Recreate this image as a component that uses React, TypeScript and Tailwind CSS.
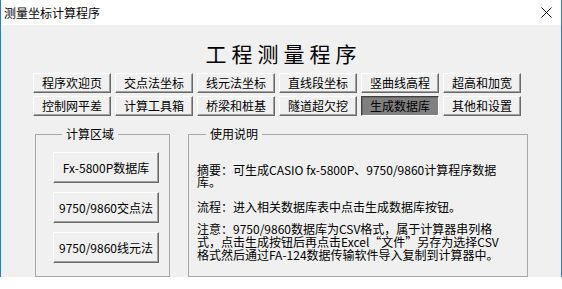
import React from "react";

const font = { fontFamily: '"Noto Sans CJK SC", "Noto Sans", sans-serif' };

const btn =
  "flex items-center justify-center text-[12px] leading-none text-black bg-[#f0f0f0] border border-t-white border-l-white border-r-[#696969] border-b-[#696969] shadow-[inset_-1px_-1px_0_#a0a0a0]";
const btnOn =
  "flex items-center justify-center text-[12px] leading-none text-black bg-[#808080] border border-t-[#404040] border-l-[#404040] border-r-white border-b-white shadow-[inset_1px_1px_0_#696969]";

const row1 = ["程序欢迎页", "交点法坐标", "线元法坐标", "直线段坐标", "竖曲线高程", "超高和加宽"];
const row2 = ["控制网平差", "计算工具箱", "桥梁和桩基", "隧道超欠挖", "生成数据库", "其他和设置"];

export default function App() {
  return (
    <div className="w-[562px] h-[289px] bg-white overflow-hidden" style={font}>
      <div className="h-[277px] border-l border-r border-[#2a7bd0] flex flex-col">
        <div className="h-[25px] bg-white flex items-center justify-between pl-[3px] pr-[9px]">
          <span className="text-[12px] leading-none text-black">测量坐标计算程序</span>
          <svg width="11" height="11" viewBox="0 0 11 11">
            <path d="M0.5 0.5 L10.5 10.5 M10.5 0.5 L0.5 10.5" stroke="#111" strokeWidth="1" fill="none" />
          </svg>
        </div>
        <div className="flex-1 bg-[#f0f0f0] flex flex-col">
          <div className="pt-[16px] flex justify-center">
            <span className="text-[21px] leading-[24px] tracking-[5px] pl-[5px] text-black">工程测量程序</span>
          </div>
          <div className="mt-[8px] pl-[32px] flex flex-col gap-[3px]">
            <div className="flex gap-[4px]">
              {row1.map((t) => (
                <div key={t} className={`${btn} w-[78px] h-[20px]`}>{t}</div>
              ))}
            </div>
            <div className="flex gap-[4px]">
              {row2.map((t) => (
                <div key={t} className={`${t === "生成数据库" ? btnOn : btn} w-[78px] h-[20px]`}>{t}</div>
              ))}
            </div>
          </div>
          <div className="mt-[10px] pl-[34px] flex gap-[18px]">
            <fieldset className="w-[135px] h-[151px] border border-[#a8a8a8] pl-[17px] pt-[10px] flex flex-col gap-[9px]">
              <legend className="ml-[9px] px-[4px] text-[12px] leading-[16px] text-black">计算区域</legend>
              <div className={`${btn} w-[106px] h-[31px]`}>Fx-5800P数据库</div>
              <div className={`${btn} w-[106px] h-[31px]`}>9750/9860交点法</div>
              <div className={`${btn} w-[106px] h-[31px]`}>9750/9860线元法</div>
            </fieldset>
            <fieldset className="w-[340px] h-[151px] border border-[#a8a8a8] pl-[8px] pt-[22px]">
              <legend className="ml-[9px] px-[4px] text-[12px] leading-[16px] text-black">使用说明</legend>
              <div className="text-[12px] leading-[12px] text-black">
                <p>
                  摘要：可生成CASIO fx-5800P、9750/9860计算程序数据
                  <br />
                  库。
                </p>
                <p className="mt-[13px]">流程：进入相关数据库表中点击生成数据库按钮。</p>
                <p className="mt-[9px] leading-[13px]">
                  注意：9750/9860数据库为CSV格式，属于计算器串列格
                  <br />
                  式，点击生成按钮后再点击Excel“文件”另存为选择CSV
                  <br />
                  格式然后通过FA-124数据传输软件导入复制到计算器中。
                </p>
              </div>
            </fieldset>
          </div>
        </div>
      </div>
    </div>
  );
}
